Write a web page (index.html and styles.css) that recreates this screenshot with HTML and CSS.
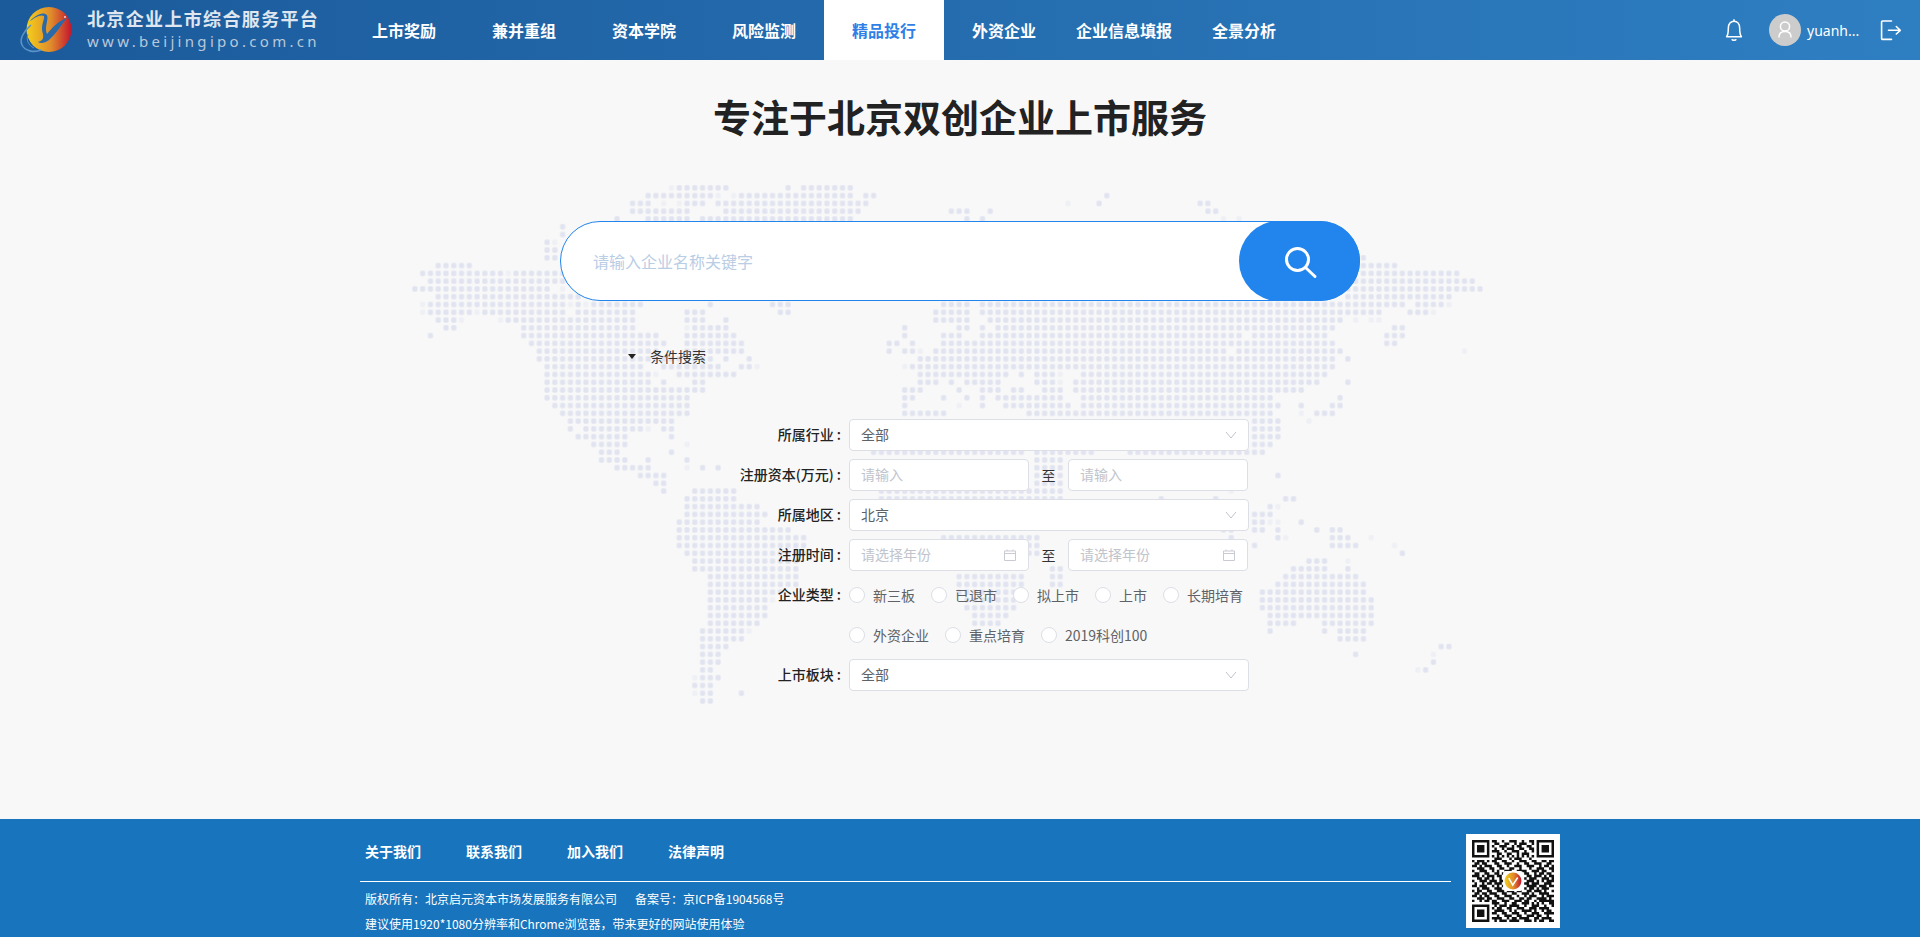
FILE: index.html
```html
<!DOCTYPE html>
<html lang="zh-CN">
<head>
  <meta charset="UTF-8" />
  <title>北京企业上市综合服务平台</title>
  <link rel="stylesheet" href="styles.css">
</head>
<body>
  <header>
    <div class="brand">
      <svg class="logo" viewBox="0 0 60 60" width="60" height="60">
        <defs>
          <linearGradient id="logoFill" x1="0" x2="1" y1="0" y2="0">
            <stop offset="0" stop-color="#f4d01a" />
            <stop offset="0.55" stop-color="#df8a2c" />
            <stop offset="1" stop-color="#c4142f" />
          </linearGradient>
        </defs>
        <circle cx="33" cy="29.5" r="22.5" fill="url(#logoFill)" />
        <path d="M13 22C19 15 27 11 31 15C33 20 28 27 31 34C36 28 42 21 51 18C45 25 40 34 33 40C29 43 25 44 22 42C26 41 28 39 27 34C24 26 29 19 28 16C24 14 18 18 13 22Z" fill="#2a6aa8" />
        <path d="M15 25C8 31 3 39 6 45C9 51 18 53 25 50" fill="none" stroke="#5a93c8" stroke-width="1.6" />
        <path d="M12 34C10 40 12 45 18 48" fill="none" stroke="#5a93c8" stroke-width="1" />
        <circle cx="49" cy="17" r="1" fill="#f6d9d9" />
      </svg>
      <div class="brand-text">
        <div class="brand-name">北京企业上市综合服务平台</div>
        <div class="brand-url">www.beijingipo.com.cn</div>
      </div>
    </div>
    <nav>
      <a href="#">上市奖励</a>
      <a href="#">兼并重组</a>
      <a href="#">资本学院</a>
      <a href="#">风险监测</a>
      <a href="#" class="active">精品投行</a>
      <a href="#" class="tight-right">外资企业</a>
      <a href="#" class="tight">企业信息填报</a>
      <a href="#" class="tight">全景分析</a>
    </nav>
    <div class="user-bar">
      <svg class="bell" viewBox="0 0 18 22" width="20" height="24" fill="none" stroke="#fff" stroke-width="1.4">
        <path d="M9 1.2V3" />
        <path d="M2.2 17.2C3.6 15.6 3.8 14 3.8 9.2C3.8 5.4 6 3 9 3S14.2 5.4 14.2 9.2C14.2 14 14.4 15.6 15.8 17.2Z" stroke-linejoin="round" />
        <path d="M7 19.4C7.4 20.6 10.6 20.6 11 19.4" />
      </svg>
      <div class="avatar">
        <svg viewBox="0 0 32 32" width="32" height="32" fill="none" stroke="#fff" stroke-width="1.5">
          <circle cx="16" cy="12.5" r="4.6" />
          <path d="M10 23C10 19.5 12.5 17.6 16 17.6S22 19.5 22 23" stroke-linecap="round" />
        </svg>
      </div>
      <span class="username">yuanh...</span>
      <svg class="logout" viewBox="0 0 22 22" width="22" height="22" fill="none" stroke="#fff" stroke-width="1.6" stroke-linecap="round" stroke-linejoin="round">
        <path d="M11.5 2H2.6A1 1 0 0 0 1.6 3V19.400A1 1 0 0 0 2.6 20.400H11.500" />
        <path d="M8.500 11.300H20.300M16.300 7.500L20.300 11.300L16.300 15" />
      </svg>
    </div>
  </header>

  <main>
    <!-- dotted world map, one stroke per row of dots -->
    <svg class="world-map" viewBox="0 -0.5 140 68" width="1088.5" height="528.7" fill="none">
      <defs>
        <pattern id="mapDot" patternUnits="userSpaceOnUse" x="0" y="-0.5" width="1" height="1">
          <rect x="0.17" y="0.17" width="0.66" height="0.66" rx="0.18" fill="#e1e4f0" />
        </pattern>
      </defs>
      <path stroke="url(#mapDot)" stroke-width="1" d="
        M34 0H41M48 0H49M50 0H57
        M30 1H39M42 1H57M58 1H60M89 1H90
        M28 2H31M35 2H38M39 2H59M88 2H89M101 2H103
        M28 3H36M40 3H58M69 3H72M74 3H75M102 3H104
        M26 4H27M30 4H36M37 4H57M71 4H72M73 4H74
        M19 5H20M19 6H20M17 7H18M17 8H19M17 9H19M122 9H123
        M3 10H8M122 10H127
        M1 11H12M13 11H21M122 11H135
        M2 12H21M121 12H137
        M0 13H18M120 13H138
        M3 14H22M120 14H134
        M2 15H20M21 15H22M23 15H30M38 15H39M46 15H49M68 15H72M73 15H128M129 15H133
        M2 16H8M9 16H20M21 16H29M35 16H38M47 16H49M67 16H72M73 16H125M128 16H131
        M3 17H6M12 17H29M35 17H38M40 17H41M67 17H72M74 17H120
        M4 18H6M14 18H29M36 18H41M63 18H64M70 18H72M73 18H74M75 18H119M126 18H128
        M2 19H3M14 19H32M35 19H42M63 19H64M68 19H71M73 19H107M108 19H118M125 19H128
        M15 20H33M35 20H43M61 20H63M64 20H65M68 20H119M125 20H127
        M16 21H32M35 21H43M61 21H62M63 21H65M67 21H105M106 21H120
        M16 22H39M40 22H41M43 22H44M65 22H119M120 22H121
        M17 23H30M32 23H40M42 23H44M64 23H119
        M17 24H31M34 24H42M65 24H77M78 24H79M80 24H83M86 24H118
        M17 25H31M32 25H33M36 25H38M65 25H68M69 25H70M71 25H76M80 25H83M85 25H117M120 25H121
        M17 26H38M63 26H66M70 26H71M73 26H76M77 26H79M81 26H84M85 26H115
        M17 27H36M63 27H65M68 27H69M71 27H72M73 27H74M75 27H84M86 27H111M119 27H120
        M18 28H36M63 28H64M73 28H74M76 28H85M86 28H112M114 28H115M118 28H120
        M19 29H36M63 29H69M79 29H111M116 29H119
        M20 30H34M108 30H112
        M20 31H21M22 31H30M32 31H34M108 31H112
        M21 32H28M33 32H34M108 32H112
        M23 33H28M108 33H111
        M24 34H27M33 34H34M59 34H79M80 34H88M92 34H110
        M24 35H28M30 35H31M35 35H36M80 35H84
        M26 36H31M37 36H38M39 36H40M80 36H84
        M29 37H33M80 37H84M111 37H112
        M31 38H33M80 38H84
        M32 39H33M36 39H42M60 39H84
        M35 40H42M60 40H84M96 40H97M103 40H104M112 40H114
        M35 41H45M110 41H111
        M35 42H46M108 42H111
        M34 43H45M108 43H110M114 43H115
        M34 44H49M104 44H106M108 44H110M111 44H112M116 44H117M118 44H120
        M34 45H51M68 45H81M105 45H106M111 45H112M118 45H121
        M34 46H51M79 46H81M108 46H109M118 46H122
        M35 47H51M79 47H81M127 47H128
        M36 48H50M115 48H118
        M36 49H50M82 49H84M113 49H118M120 49H121
        M38 50H50M70 50H79M82 50H84M112 50H122
        M38 51H50M70 51H79M82 51H84M111 51H123
        M38 52H48M70 52H79M109 52H123
        M38 53H46M71 53H78M109 53H124
        M38 54H46M71 54H78M109 54H124
        M38 55H46M72 55H77M110 55H124
        M38 56H45M72 56H76M110 56H114M117 56H124
        M37 57H43M110 57H111M117 57H118M119 57H123
        M37 58H43M119 58H123
        M37 59H41M132 59H134
        M37 60H40M121 60H122
        M37 61H40M131 61H132
        M37 62H39M130 62H131
        M37 63H40
        M36 64H39
        M37 65H39M42 65H43
        M37 66H39" />
      <path class="map-faint" stroke="url(#mapDot)" stroke-width="1" d="
        M33 0H34M39 1H40M41 1H42M32 2H33M34 2H35M84 2H85M104 4H105M106 4H107
        M18 7H19M12 11H13M19 13H20M1 15H2M20 15H21M22 15H23M133 15H134
        M1 16H2M8 16H9M131 16H132M6 17H7M11 17H12M121 17H122M123 17H125
        M35 18H36M65 21H66M135 21H136M44 23H45M63 23H64M31 24H32M83 24H84M83 25H84
        M70 28H71M114 29H115M115 30H116M30 31H31M35 33H36M35 36H36M105 39H106
        M111 41H112M110 43H112M112 45H113M123 45H124M126 46H127M120 48H121
        M46 53H47M43 57H44M131 60H132M129 62H130M36 63H37M36 65H37" />
    </svg>

    <h1>专注于北京双创企业上市服务</h1>

    <div class="search-bar">
      <input class="search-input" type="text" placeholder="请输入企业名称关键字" />
      <button class="search-btn" aria-label="搜索">
        <svg viewBox="0 0 36 36" width="36" height="36" fill="none" stroke="#fff" stroke-width="3" stroke-linecap="round">
          <circle cx="14.500" cy="14.500" r="11" />
          <path d="M22.500 22.500L32 31.500" />
        </svg>
      </button>
    </div>

    <div class="toggle">
      <span class="caret"></span>
      <span>条件搜索</span>
    </div>

    <form class="filter-form">
      <div class="form-row">
        <label>所属行业 :</label>
        <div class="field select">
          <span>全部</span>
          <svg class="chevron" viewBox="0 0 12 8" width="12" height="8"><path d="M1 1L6 7L11 1" /></svg>
        </div>
      </div>
      <div class="form-row">
        <label>注册资本(万元) :</label>
        <div class="range">
          <input class="field" type="text" placeholder="请输入" />
          <span class="range-sep">至</span>
          <input class="field" type="text" placeholder="请输入" />
        </div>
      </div>
      <div class="form-row">
        <label>所属地区 :</label>
        <div class="field select">
          <span>北京</span>
          <svg class="chevron" viewBox="0 0 12 8" width="12" height="8"><path d="M1 1L6 7L11 1" /></svg>
        </div>
      </div>
      <div class="form-row">
        <label>注册时间 :</label>
        <div class="range">
          <div class="field select placeholder">
            <span>请选择年份</span>
            <svg class="calendar" viewBox="0 0 12 12" width="12" height="12"><path d="M.5 2H11.500V11.500H.5ZM.5 4.500H11.500M3 .5V2M9 .5V2" /></svg>
          </div>
          <span class="range-sep">至</span>
          <div class="field select placeholder">
            <span>请选择年份</span>
            <svg class="calendar" viewBox="0 0 12 12" width="12" height="12"><path d="M.5 2H11.500V11.500H.5ZM.5 4.500H11.500M3 .5V2M9 .5V2" /></svg>
          </div>
        </div>
      </div>
      <div class="form-row radio-row">
        <label>企业类型 :</label>
        <div class="radios">
          <span class="radio"><i></i>新三板</span>
          <span class="radio"><i></i>已退市</span>
          <span class="radio"><i></i>拟上市</span>
          <span class="radio"><i></i>上市</span>
          <span class="radio"><i></i>长期培育</span>
          <span class="radio"><i></i>外资企业</span>
          <span class="radio"><i></i>重点培育</span>
          <span class="radio"><i></i>2019科创100</span>
        </div>
      </div>
      <div class="form-row">
        <label>上市板块 :</label>
        <div class="field select">
          <span>全部</span>
          <svg class="chevron" viewBox="0 0 12 8" width="12" height="8"><path d="M1 1L6 7L11 1" /></svg>
        </div>
      </div>
    </form>
  </main>

  <footer>
    <div class="footer-main">
      <div class="footer-links">
        <a href="#">关于我们</a>
        <a href="#">联系我们</a>
        <a href="#">加入我们</a>
        <a href="#">法律声明</a>
      </div>
      <div class="footer-info">
        <p><span>版权所有&#xFF1A;北京启元资本市场发展服务有限公司</span><span class="icp">备案号&#xFF1A;京ICP备1904568号</span></p>
        <p>建议使用1920*1080分辨率和Chrome浏览器&#xFF0C;带来更好的网站使用体验</p>
      </div>
    </div>
    <div class="qr">
      <svg viewBox="0 -0.5 33 33" width="82" height="82" fill="none">
        <path fill="#111" fill-rule="evenodd" d="M0 -.5H7V6.500H0ZM1 .5V5.500H6V.5ZM26 -.5H33V6.500H26ZM27 .5V5.500H32V.5ZM0 25.500H7V32.500H0ZM1 26.500V31.500H6V26.500Z" />
        <path fill="#111" d="M2 1.500H5V4.500H2ZM28 1.500H31V4.500H28ZM2 27.500H5V30.500H2Z" />
        <path stroke="#111" stroke-width="1" d="
          M8 0H10M12 0H13M15 0H18M20 0H21M23 0H25
          M9 1H11M13 1H15M17 1H18M19 1H22M24 1H25
          M8 2H9M11 2H14M16 2H17M18 2H20M22 2H24
          M9 3H10M12 3H13M14 3H17M19 3H21M23 3H25
          M8 4H11M13 4H14M16 4H19M21 4H22M24 4H25
          M10 5H12M14 5H16M18 5H19M20 5H23
          M8 6H9M10 6H11M12 6H13M14 6H15M16 6H17M18 6H19M20 6H21M22 6H23M24 6H25
          M9 7H12M15 7H16M17 7H20M23 7H24
          M0 8H1M2 8H5M6 8H7M8 8H10M12 8H14M16 8H17M19 8H22M24 8H26M28 8H30M31 8H33
          M1 9H3M4 9H6M9 9H11M13 9H16M18 9H19M21 9H23M25 9H28M30 9H32
          M0 10H2M3 10H4M5 10H8M10 10H12M14 10H15M17 10H20M22 10H25M27 10H28M29 10H31M32 10H33
          M2 11H5M7 11H9M11 11H13M15 11H17M19 11H20M23 11H24M26 11H29M31 11H33
          M0 12H1M3 12H6M8 12H9M10 12H11M13 12H16M18 12H22M24 12H27M28 12H30M32 12H33
          M1 13H3M5 13H7M9 13H11M12 13H13M21 13H23M25 13H26M27 13H29M30 13H32
          M0 14H3M4 14H5M6 14H9M10 14H12M22 14H24M25 14H28M29 14H30M31 14H33
          M2 15H4M5 15H7M8 15H9M11 15H12M21 15H22M23 15H26M28 15H31M32 15H33
          M0 16H1M3 16H6M7 16H10M11 16H13M22 16H25M26 16H27M28 16H29M30 16H33
          M1 17H2M4 17H5M6 17H8M9 17H12M21 17H23M24 17H27M29 17H32
          M0 18H2M3 18H6M8 18H9M10 18H11M12 18H13M22 18H26M27 18H30M31 18H33
          M2 19H3M4 19H7M9 19H12M21 19H22M23 19H25M26 19H27M28 19H31
          M0 20H1M2 20H4M6 20H8M10 20H13M14 20H17M18 20H20M22 20H24M25 20H28M29 20H30M32 20H33
          M1 21H3M4 21H6M7 21H10M12 21H14M16 21H18M20 21H23M24 21H25M27 21H31
          M0 22H2M3 22H4M5 22H7M9 22H11M13 22H16M18 22H19M21 22H22M23 22H26M28 22H29M30 22H33
          M2 23H5M6 23H8M10 23H13M15 23H17M19 23H21M22 23H24M26 23H30M31 23H32
          M0 24H1M3 24H4M5 24H7M8 24H10M12 24H15M17 24H20M21 24H23M25 24H26M27 24H33
          M8 25H11M13 25H14M16 25H18M20 25H23M24 25H25M26 25H27M28 25H29M31 25H33
          M9 26H10M11 26H14M15 26H19M21 26H22M24 26H27M29 26H30M32 26H33
          M8 27H9M10 27H12M14 27H16M18 27H21M23 27H26M27 27H31
          M9 28H13M15 28H16M17 28H18M20 28H24M25 28H26M28 28H29M30 28H32
          M8 29H10M12 29H14M16 29H19M21 29H22M24 29H27M29 29H33
          M10 30H11M13 30H16M18 30H20M22 30H25M26 30H28M30 30H31
          M8 31H12M14 31H15M16 31H18M19 31H23M25 31H27M28 31H32
          M9 32H10M11 32H14M15 32H19M21 32H24M25 32H26M27 32H29M31 32H33" />
        <rect x="12.500" y="12" width="8" height="8" rx="1" fill="#fff" />
        <circle cx="16.500" cy="16" r="3.400" fill="url(#logoFill)" />
        <path d="M14.800 14.800L16.400 17.600L18.400 14.600" stroke="#fff" stroke-width="0.6" />
      </svg>
    </div>
  </footer>
</body>
</html>
```

FILE: styles.css
```css
* {
  box-sizing: border-box;
}
html, body {
  height: 100%;
}
body {
  margin: 0;
  display: flex;
  flex-direction: column;
  height: 937px;
  overflow: hidden;
  font-family: "Noto Sans CJK SC", "Noto Sans", sans-serif;
  font-size: 14px;
  color: #333;
  background-color: #f8f8f8;
}
a {
  text-decoration: none;
  color: inherit;
}

/* header */
header {
  display: flex;
  align-items: stretch;
  height: 60px;
  flex: none;
  color: white;
  background: linear-gradient(90deg, #1b5a9b, #2e7fc2);
}
.brand {
  display: flex;
  width: 344px;
  padding-left: 16px;
}
.logo {
  flex: none;
}
.brand-text {
  padding: 5px 0 0 11px;
  color: #dfe6ef;
}
.brand-name {
  font-size: 18px;
  line-height: 26px;
  font-weight: 700;
  letter-spacing: 1.35px;
  white-space: nowrap;
}
.brand-url {
  font-family: "Noto Sans", sans-serif;
  font-size: 15px;
  line-height: 20px;
  letter-spacing: 3.3px;
  color: #b9c8da;
  white-space: nowrap;
}
nav {
  display: flex;
}
nav a {
  display: flex;
  align-items: center;
  padding: 0 28px;
  font-size: 16px;
  font-weight: 700;
  color: white;
}
nav a.active {
  background-color: white;
  color: #2f7fe6;
}
nav a.tight-right {
  padding-right: 20px;
}
nav a.tight {
  padding: 0 20px;
}
.user-bar {
  display: flex;
  align-items: center;
  margin-left: auto;
  padding-right: 18px;
}
.bell {
  margin-right: 25px;
}
.avatar {
  width: 32px;
  height: 32px;
  border-radius: 50%;
  background-color: #ccc;
}
.username {
  width: 79px;
  padding-left: 6px;
  font-family: "Noto Sans", sans-serif;
  font-size: 14px;
}

/* main */
main {
  position: relative;
  flex: 1;
  padding-top: 27px;
}
.world-map {
  position: absolute;
  left: 411.1px;
  top: 123.8px;
}
.map-faint {
  opacity: 0.4;
}
main h1 {
  position: relative;
  margin: 0;
  font-size: 38px;
  line-height: 58px;
  font-weight: 700;
  text-align: center;
  color: #222;
}
.search-bar {
  position: relative;
  display: flex;
  width: 800px;
  height: 80px;
  margin: 76px auto 0;
  border: 1px solid #2284ed;
  border-radius: 40px;
  background: white;
}
.search-input {
  flex: 1;
  min-width: 0;
  padding: 0 0 0 32px;
  border: none;
  outline: none;
  background: none;
  font-family: inherit;
  font-size: 16px;
}
.search-input::placeholder {
  color: #b9cde5;
}
.search-btn {
  display: flex;
  align-items: center;
  justify-content: center;
  width: 121px;
  margin: -1px;
  padding: 3px 0 0 2px;
  border: none;
  border-radius: 40px;
  background-color: #2284ed;
}
.toggle {
  position: relative;
  display: flex;
  align-items: center;
  width: 300px;
  height: 20px;
  margin: 45px 0 0 628px;
  color: #333;
}
.caret {
  width: 0;
  height: 0;
  margin-right: 14px;
  border-left: 4px solid transparent;
  border-right: 4px solid transparent;
  border-top: 5px solid #222;
}

/* form */
.filter-form {
  position: relative;
  width: 520px;
  margin: 53px 0 0 729px;
}
.form-row {
  display: flex;
  align-items: center;
  height: 32px;
  margin-bottom: 8px;
}
.form-row label {
  width: 120px;
  flex: none;
  padding-right: 8px;
  padding-bottom: 2px;
  text-align: right;
  font-weight: 500;
  color: #222;
  white-space: nowrap;
}
.field {
  display: flex;
  align-items: center;
  height: 32px;
  width: 100%;
  padding: 0 12px 0 11px;
  border: 1px solid #dcdfe6;
  border-radius: 4px;
  background: white;
  color: #606266;
  font-family: inherit;
  font-size: 14px;
  outline: none;
}
.field span {
  padding-bottom: 2px;
}
input.field {
  padding-bottom: 2px;
}
.field::placeholder,
.placeholder {
  color: #c0c4cc;
}
.select {
  justify-content: space-between;
}
.chevron {
  fill: none;
  stroke: #c0c4cc;
  stroke-width: 1;
  margin-right: -1px;
}
.calendar {
  fill: none;
  stroke: #c8cbd2;
  stroke-width: 1;
}
.range {
  display: flex;
  flex: none;
  width: 399px;
  align-items: center;
}
.range .field {
  width: 180px;
  flex: none;
}
.range-sep {
  flex: 1;
  text-align: center;
  color: #333;
}
.radio-row {
  align-items: flex-start;
  height: 80px;
  margin-bottom: 0;
}
.radio-row label {
  line-height: 30px;
}
.radios {
  display: flex;
  flex-wrap: wrap;
  flex: none;
  width: 412px;
}
.radio {
  display: flex;
  align-items: center;
  height: 40px;
  margin-top: -4px;
  margin-bottom: 4px;
  margin-right: 16px;
  color: #606266;
}
.radio i {
  width: 16px;
  height: 16px;
  margin-right: 8px;
  border: 1px solid #dcdfe6;
  border-radius: 50%;
  background: white;
}

/* footer */
footer {
  display: flex;
  flex: none;
  height: 118px;
  padding-left: 360px;
  color: white;
  background-color: #1874bc;
}
.footer-main {
  width: 1091px;
}
.footer-links {
  display: flex;
  align-items: center;
  gap: 45px;
  height: 63px;
  padding: 2px 0 0 5px;
  border-bottom: 1px solid white;
  font-weight: 700;
}
.footer-info {
  padding: 4px 0 0 5px;
  font-size: 12px;
  line-height: 25px;
}
.footer-info p {
  margin: 0;
}
.icp {
  margin-left: 18px;
}
.qr {
  display: flex;
  align-items: center;
  justify-content: center;
  width: 94px;
  height: 94px;
  margin: 15px 0 0 15px;
  background: white;
}
```
